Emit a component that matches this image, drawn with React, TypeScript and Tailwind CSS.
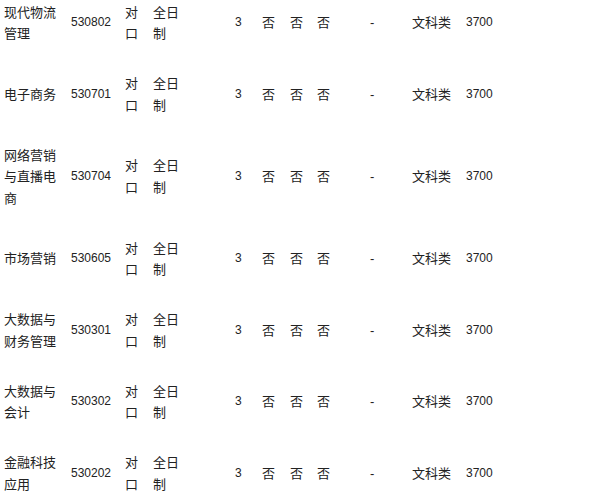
import React from "react";

const rows = [
  { name: "现代物流管理", code: "530802" },
  { name: "电子商务", code: "530701" },
  { name: "网络营销与直播电商", code: "530704" },
  { name: "市场营销", code: "530605" },
  { name: "大数据与财务管理", code: "530301" },
  { name: "大数据与会计", code: "530302" },
  { name: "金融科技应用", code: "530202" },
];

export default function App() {
  return (
    <div
      className="w-[596px] h-[501px] overflow-hidden bg-white text-[#222] text-[13px] leading-[21.5px]"
      style={{ fontFamily: '"Liberation Sans", "Noto Sans CJK SC", sans-serif' }}
    >
      <div className="mt-[-12.6px] pl-[4px] flex flex-col">
        {rows.map((r) => (
          <div key={r.code} className="flex items-center py-[14.25px]">
            <div className="w-[67px] pr-[10px] break-all">{r.name}</div>
            <div className="w-[54px] text-[12px]">{r.code}</div>
            <div className="w-[28px] pr-[12px]">对口</div>
            <div className="w-[82px] pr-[50px]">全日制</div>
            <div className="w-[27px] text-[12px]">3</div>
            <div className="w-[28px]">否</div>
            <div className="w-[27px]">否</div>
            <div className="w-[53px]">否</div>
            <div className="w-[42px]">-</div>
            <div className="w-[54px]">文科类</div>
            <div className="text-[12px]">3700</div>
          </div>
        ))}
      </div>
    </div>
  );
}
